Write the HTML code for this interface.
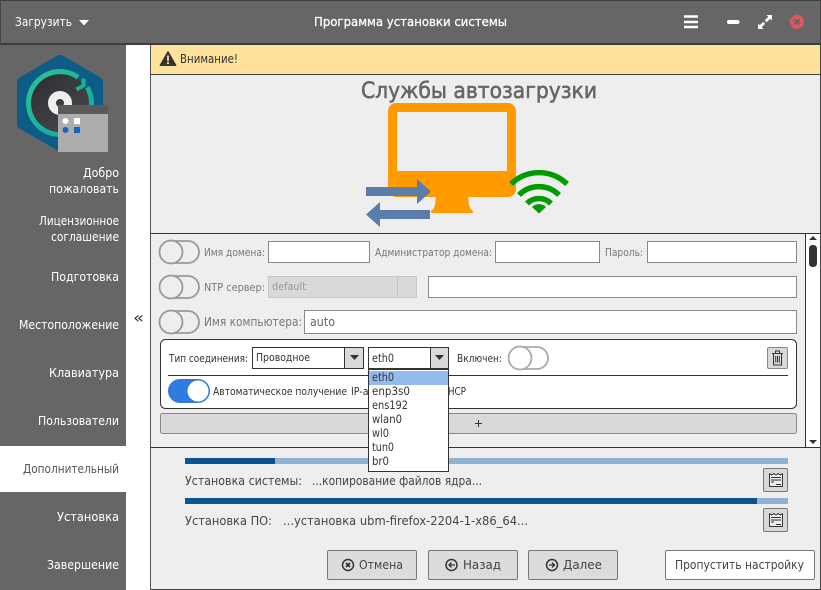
<!DOCTYPE html>
<html><head><meta charset="utf-8"><style>
html,body{margin:0;padding:0;background:#eee;width:821px;height:590px;overflow:hidden}
svg{display:block}
text{font-family:"DejaVu Sans","Liberation Sans",sans-serif;white-space:pre}
.s{fill:#fff;font-size:12.5px}
.l{fill:#777;font-size:10.5px}
.t{fill:#444;font-size:12px}
.d{fill:#333;font-size:11.5px}
</style></head><body>
<svg width="821" height="590" viewBox="0 0 821 590" xmlns="http://www.w3.org/2000/svg">
<defs>
<linearGradient id="ring" x1="0" y1="0" x2="1" y2="1"><stop offset="0" stop-color="#2dc28f"/><stop offset="1" stop-color="#0ea5a5"/></linearGradient>
<linearGradient id="disc" x1="0" y1="0" x2="1" y2="1"><stop offset="0" stop-color="#2c2c30"/><stop offset="1" stop-color="#4a4a50"/></linearGradient>
</defs>
<rect width="821" height="590" fill="#eee"/>
<!-- header -->
<rect x="0" y="0" width="821" height="44" fill="#666"/>
<rect x="0" y="0" width="821" height="1" fill="#3c3c3c"/>
<rect x="0" y="43" width="821" height="2" fill="#3c3c3c"/>
<rect x="0" y="0" width="1" height="44" fill="#444"/>
<rect x="820" y="0" width="1" height="44" fill="#444"/>
<text class="s" x="15" y="26" textLength="57" lengthAdjust="spacingAndGlyphs">Загрузить</text>
<path d="M79 20h10l-5 5.5z" fill="#fff"/>
<text class="s" x="314" y="26" textLength="193" lengthAdjust="spacingAndGlyphs" stroke="#fff" stroke-width=".3">Программа установки системы</text>
<path d="M684 16.500h14M684 22h14M684 27h14" stroke="#fff" stroke-width="2.400"/>
<rect x="727" y="20" width="12.500" height="4" rx="2" fill="#fff"/>
<path d="M758 29v-5.500l1.800 1.800 3.500-3.500 1.900 1.900-3.500 3.500 1.800 1.800zM772 15v5.500l-1.800-1.800-3.500 3.500-1.900-1.900 3.500-3.500-1.800-1.800z" fill="#fff"/>
<circle cx="797" cy="22" r="7" fill="#d9585f"/>
<path d="M794.500 19.500l5 5M799.500 19.500l-5 5" stroke="#666" stroke-width="2"/>
<!-- sidebar -->
<rect x="0" y="45" width="126" height="545" fill="#666"/>
<rect x="126" y="45" width="24" height="545" fill="#fff"/>
<rect x="150" y="45" width="1" height="545" fill="#555"/>
<text x="133" y="323" font-size="16" fill="#333" textLength="11" lengthAdjust="spacingAndGlyphs">«</text>
<!-- logo -->
<path d="M57.500 55.500q2.500-1 5 0l38 22q2.500 1.500 2.500 4.500v42q0 3-2.500 4.500l-38 22q-2.500 1-5 0l-38-22q-2.500-1.500-2.500-4.500V82q0-3 2.500-4.500z" fill="#0c5c87"/>
<circle cx="60" cy="103" r="30" fill="url(#disc)"/>
<path d="M78 77.200A31.500 31.500 0 1 0 87.300 87.300" fill="none" stroke="url(#ring)" stroke-width="5"/>
<path d="M76.500 89.500l7-4v-7" fill="none" stroke="#16b39a" stroke-width="4"/>
<circle cx="60" cy="103" r="8" fill="none" stroke="#eee" stroke-width="8"/>
<rect x="58" y="105" width="50" height="9" fill="#5a5a5a"/>
<rect x="58" y="114" width="50" height="38" fill="#adadad"/>
<circle cx="65.500" cy="121" r="3" fill="#fff"/><rect x="74" y="118" width="6" height="6" fill="#fff"/>
<circle cx="65.500" cy="130" r="3" fill="#1467bf"/><rect x="74" y="127" width="6" height="6" fill="#1467bf"/>
<!-- nav -->
<text class="s" x="83" y="177" textLength="36" lengthAdjust="spacingAndGlyphs">Добро</text>
<text class="s" x="49" y="193" textLength="70" lengthAdjust="spacingAndGlyphs">пожаловать</text>
<text class="s" x="39" y="225" textLength="80" lengthAdjust="spacingAndGlyphs">Лицензионное</text>
<text class="s" x="51" y="241" textLength="68" lengthAdjust="spacingAndGlyphs">соглашение</text>
<text class="s" x="51" y="281" textLength="68" lengthAdjust="spacingAndGlyphs">Подготовка</text>
<text class="s" x="19" y="329" textLength="100" lengthAdjust="spacingAndGlyphs">Местоположение</text>
<text class="s" x="49" y="377" textLength="70" lengthAdjust="spacingAndGlyphs">Клавиатура</text>
<text class="s" x="38" y="425" textLength="81" lengthAdjust="spacingAndGlyphs">Пользователи</text>
<rect x="0" y="446" width="126" height="46" fill="#fff"/>
<text class="s" x="23" y="473" textLength="96" lengthAdjust="spacingAndGlyphs" style="fill:#555">Дополнительный</text>
<text class="s" x="57" y="521" textLength="62" lengthAdjust="spacingAndGlyphs">Установка</text>
<text class="s" x="47" y="569" textLength="72" lengthAdjust="spacingAndGlyphs">Завершение</text>
<!-- warning -->
<rect x="151" y="45" width="669" height="29" fill="#fee299"/>
<rect x="151" y="74" width="669" height="1" fill="#444"/>
<path d="M168 51.500l8 14h-16z" fill="#333" stroke="#333" stroke-linejoin="round"/>
<path d="M168 55.500v5.500M168 62v2" stroke="#fee299" stroke-width="1.800"/>
<text class="d" x="180" y="63" textLength="58" lengthAdjust="spacingAndGlyphs" style="font-size:12px">Внимание!</text>
<text x="361" y="98" font-size="22" fill="#666" stroke="#666" stroke-width=".6" textLength="236" lengthAdjust="spacingAndGlyphs">Службы автозагрузки</text>
<!-- illustration -->
<rect x="388" y="103" width="128" height="94" rx="8" fill="#ff9a00"/>
<rect x="397" y="112" width="110" height="59" rx="1.500" fill="#eee"/>
<path d="M436 196h32l1 9q1 4 4 6 1 2-2 2h-38q-3 0-2-2 3-2 4-6z" fill="#ff9a00"/>
<path d="M366 187h51v-8l14 12.500-14 12.500v-8h-51z" fill="#5a7ea9"/>
<path d="M430 210h-50v-8l-14 12.500 14 12.500v-8h50z" fill="#5a7ea9"/>
<path d="M511 184A40 40 0 0 1 567 184M519 195A28 28 0 0 1 559 195M527 203.500A17 17 0 0 1 551 203.500" fill="none" stroke="#009b00" stroke-width="5.500"/>
<path d="M539 213.500l-7-6.500a10 10 0 0 1 14 0z" fill="#009b00"/>
<rect x="151" y="233" width="669" height="1" fill="#333"/>
<!-- scrollbar -->
<rect x="805" y="234" width="15" height="213" fill="#fff"/>
<rect x="805" y="234" width="1" height="213" fill="#333"/>
<path d="M809 240h8l-4-4z" fill="#333"/>
<rect x="809" y="245" width="8" height="22" rx="3.500" fill="#333"/>
<path d="M809 440h8l-4 4z" fill="#333"/>
<rect x="151" y="447" width="669" height="1" fill="#333"/>
<!-- row 1 -->
<g fill="#fff" stroke="#888">
<rect x="268.500" y="241.500" width="101" height="21"/>
<rect x="495.500" y="241.500" width="104" height="21"/>
<rect x="647.500" y="241.500" width="149" height="21"/>
<rect x="428.500" y="276.500" width="368" height="21"/>
<rect x="304.500" y="310.500" width="492" height="23"/>
</g>
<g fill="#eee" stroke="#999" stroke-width="1.800">
<rect x="160" y="241" width="39" height="22" rx="11"/><circle cx="171" cy="252" r="11.500"/>
<rect x="160" y="276" width="39" height="22" rx="11"/><circle cx="171" cy="287" r="11.500"/>
<rect x="160" y="311" width="39" height="22" rx="11"/><circle cx="171" cy="322" r="11.500"/>
</g>
<text class="l" x="204" y="256" textLength="61" lengthAdjust="spacingAndGlyphs">Имя домена:</text>
<text class="l" x="375" y="256" textLength="117" lengthAdjust="spacingAndGlyphs">Администратор домена:</text>
<text class="l" x="605" y="256" textLength="38" lengthAdjust="spacingAndGlyphs">Пароль:</text>
<text class="l" x="204" y="291" textLength="61" lengthAdjust="spacingAndGlyphs">NTP сервер:</text>
<rect x="268.500" y="276.500" width="148" height="21" fill="#d9d9d9" stroke="#c8c8c8"/>
<rect x="397" y="277" width="1" height="20" fill="#c4c4c4"/>
<text class="l" x="272" y="290" textLength="34" lengthAdjust="spacingAndGlyphs" style="fill:#999">default</text>
<text x="204" y="326" font-size="12" fill="#777" textLength="98" lengthAdjust="spacingAndGlyphs">Имя компьютера:</text>
<text x="310" y="326" font-size="12" fill="#666" textLength="25" lengthAdjust="spacingAndGlyphs">auto</text>
<!-- card -->
<rect x="160.500" y="339.500" width="636" height="69" rx="5" fill="#fff" stroke="#333"/>
<text class="d" x="169" y="362" textLength="79" lengthAdjust="spacingAndGlyphs" style="font-size:10.500px">Тип соединения:</text>
<rect x="252.500" y="347.500" width="111" height="21" fill="#fff" stroke="#333"/>
<rect x="345" y="348" width="18" height="20" fill="#d9d9d9"/><rect x="344" y="348" width="1" height="20" fill="#333"/>
<path d="M350 355h9l-4.500 5z" fill="#333"/>
<text class="d" x="256" y="361" textLength="54" lengthAdjust="spacingAndGlyphs" style="font-size:10.500px">Проводное</text>
<rect x="368.500" y="347.500" width="80" height="21" fill="#fff" stroke="#333"/>
<rect x="431" y="348" width="17" height="20" fill="#d9d9d9"/><rect x="430" y="348" width="1" height="20" fill="#333"/>
<path d="M435 355h9l-4.500 5z" fill="#333"/>
<text class="d" x="372" y="362" textLength="22" lengthAdjust="spacingAndGlyphs">eth0</text>
<text class="d" x="457" y="362" textLength="45" lengthAdjust="spacingAndGlyphs" style="font-size:10.500px">Включен:</text>
<g fill="#fff" stroke="#aaa" stroke-width="1.800">
<rect x="509" y="347" width="39" height="22" rx="11"/><circle cx="520" cy="358" r="11.500"/>
</g>
<rect x="767.500" y="347.500" width="20" height="21" rx="1.500" fill="#d9d9d9" stroke="#888"/>
<path d="M772 353.500h11M775.500 353v-2h4v2M773.500 353.500v11.500h8v-11.500M775.700 356v6.500M777.500 356v6.500M779.300 356v6.500" fill="none" stroke="#333"/>
<rect x="168" y="375" width="620" height="1" fill="#333"/>
<rect x="168" y="379" width="42" height="24" rx="12" fill="#2f7be0"/>
<circle cx="198" cy="391" r="10.500" fill="#fff"/>
<text class="d" x="213" y="395" textLength="134" lengthAdjust="spacingAndGlyphs" style="font-size:10.500px">Автоматическое получение</text>
<text class="d" x="351" y="395" textLength="47" lengthAdjust="spacingAndGlyphs" style="font-size:10.500px">IP-адреса</text>
<text class="d" x="441" y="395" textLength="25" lengthAdjust="spacingAndGlyphs" style="font-size:10.500px">DHCP</text>
<rect x="160.500" y="413.500" width="636" height="20" rx="2" fill="#d9d9d9" stroke="#888"/>
<path d="M475 423.500h7M478.500 420v7" stroke="#333"/>
<!-- progress -->
<rect x="185" y="458" width="603" height="6" fill="#90b2d3"/>
<rect x="185" y="458" width="90" height="6" fill="#0a5493"/>
<rect x="185" y="498" width="603" height="6" fill="#90b2d3"/>
<rect x="185" y="498" width="572" height="6" fill="#0a5493"/>
<text class="t" x="185" y="485" textLength="117" lengthAdjust="spacingAndGlyphs">Установка системы:</text>
<text class="t" x="312" y="485" textLength="170" lengthAdjust="spacingAndGlyphs">...копирование файлов ядра...</text>
<text class="t" x="185" y="525" textLength="87" lengthAdjust="spacingAndGlyphs">Установка ПО:</text>
<text class="t" x="283" y="525" textLength="245" lengthAdjust="spacingAndGlyphs">...установка ubm-firefox-2204-1-x86_64...</text>
<g>
<rect x="763.500" y="468.500" width="24" height="23" rx="1.500" fill="#d9d9d9" stroke="#777"/>
<path d="M769.500 473.500l2 1.500 2-1.500 2.500 1.500 2.500-1.500 2 1.500 2-1.500v13h-13z" fill="#eee" stroke="#333" stroke-linejoin="round"/>
<path d="M771 477.500h10M771 480h10M771 482h3M776 484.500h5" stroke="#333"/>
<rect x="763.500" y="508.500" width="24" height="23" rx="1.500" fill="#d9d9d9" stroke="#777"/>
<path d="M769.500 513.500l2 1.500 2-1.500 2.500 1.500 2.500-1.500 2 1.500 2-1.500v13h-13z" fill="#eee" stroke="#333" stroke-linejoin="round"/>
<path d="M771 517.500h10M771 520h10M771 522h3M776 524.500h5" stroke="#333"/>
</g>
<!-- dropdown -->
<rect x="368.500" y="369.500" width="80" height="102" fill="#fff" stroke="#333"/>
<rect x="369" y="371" width="79" height="14" fill="#94bbf0"/>
<text class="d" x="372" y="381" textLength="22" lengthAdjust="spacingAndGlyphs">eth0</text>
<text class="d" x="372" y="395" textLength="38" lengthAdjust="spacingAndGlyphs">enp3s0</text>
<text class="d" x="372" y="409" textLength="36" lengthAdjust="spacingAndGlyphs">ens192</text>
<text class="d" x="372" y="423" textLength="30" lengthAdjust="spacingAndGlyphs">wlan0</text>
<text class="d" x="372" y="437" textLength="17" lengthAdjust="spacingAndGlyphs">wl0</text>
<text class="d" x="372" y="451" textLength="22" lengthAdjust="spacingAndGlyphs">tun0</text>
<text class="d" x="372" y="465" textLength="17" lengthAdjust="spacingAndGlyphs">br0</text>
<!-- buttons -->
<rect x="327.500" y="550.500" width="89" height="29" rx="1.500" fill="#dcdcdc" stroke="#777"/>
<rect x="428.500" y="550.500" width="89" height="29" rx="1.500" fill="#dcdcdc" stroke="#777"/>
<rect x="528.500" y="550.500" width="89" height="29" rx="1.500" fill="#dcdcdc" stroke="#777"/>
<rect x="665.500" y="550.500" width="149" height="29" rx="1.500" fill="#fff" stroke="#777"/>
<circle cx="348" cy="565" r="5.500" fill="none" stroke="#333" stroke-width="1.500"/><path d="M346 563l4 4M350 563l-4 4" stroke="#333" stroke-width="1.800"/>
<circle cx="451.500" cy="565" r="5.500" fill="none" stroke="#333" stroke-width="1.500"/><path d="M455 565h-6M451.500 562.500l-2.500 2.500 2.500 2.500" fill="none" stroke="#333" stroke-width="1.300"/>
<circle cx="552" cy="565" r="5.500" fill="none" stroke="#333" stroke-width="1.500"/><path d="M549 565h6M552 562.500l2.500 2.500-2.500 2.500" fill="none" stroke="#333" stroke-width="1.300"/>
<text class="t" x="359" y="569" textLength="44" lengthAdjust="spacingAndGlyphs">Отмена</text>
<text class="t" x="463" y="569" textLength="38" lengthAdjust="spacingAndGlyphs">Назад</text>
<text class="t" x="563" y="569" textLength="39" lengthAdjust="spacingAndGlyphs">Далее</text>
<text class="t" x="675" y="569" textLength="129" lengthAdjust="spacingAndGlyphs">Пропустить настройку</text>
<!-- window borders -->
<rect x="820" y="45" width="1" height="545" fill="#444"/>
<rect x="151" y="589" width="670" height="1" fill="#444"/>
</svg>
</body></html>
